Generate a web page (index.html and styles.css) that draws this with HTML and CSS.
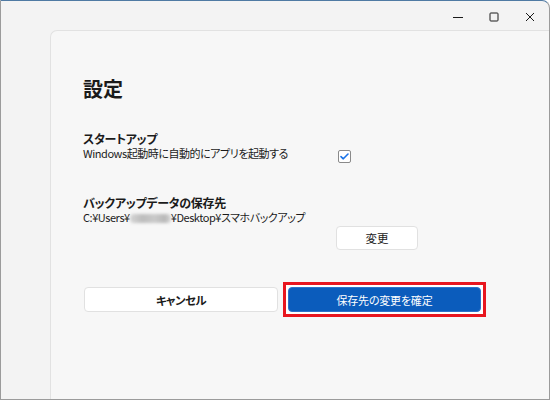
FILE: index.html
```html
<!DOCTYPE html>
<html lang="ja">
<head>
<meta charset="utf-8">
<link rel="stylesheet" href="styles.css">
</head>
<body>
<div class="window">
  <div class="titlebar">
    <div class="cap">
      <svg width="10" height="10" viewBox="0 0 10 10"><path d="M0 5.5H10" stroke="#1a1a1a" stroke-width="1"/></svg>
    </div>
    <div class="cap">
      <svg width="10" height="10" viewBox="0 0 10 10"><rect x="1" y="1" width="8" height="8" rx="0.8" fill="none" stroke="#1a1a1a" stroke-width="1"/></svg>
    </div>
    <div class="cap">
      <svg width="10" height="10" viewBox="0 0 10 10"><path d="M1 1L9 9M9 1L1 9" stroke="#1a1a1a" stroke-width="1"/></svg>
    </div>
  </div>
  <div class="body">
    <div class="panel">
      <h1 class="title">設定</h1>
      <div class="section">
        <div class="label">スタートアップ</div>
        <div class="desc">Windows起動時に自動的にアプリを起動する</div>
        <div class="check">
          <svg width="9" height="7" viewBox="0 0 9 7"><path d="M1 3.6L3.3 5.8L8 1" fill="none" stroke="#1a73e8" stroke-width="1.6" stroke-linecap="round" stroke-linejoin="round"/></svg>
        </div>
      </div>
      <div class="section second">
        <div class="label">バックアップデータの保存先</div>
        <div class="desc">C:¥Users¥<span class="blur"></span>¥Desktop¥スマホバックアップ</div>
        <button class="btn change">変更</button>
      </div>
      <div class="actions">
        <button class="btn cancel">キャンセル</button>
        <div class="focus-ring">
          <button class="btn primary">保存先の変更を確定</button>
        </div>
      </div>
    </div>
  </div>
</div>
</body>
</html>
```

FILE: styles.css
```css
* { box-sizing: border-box; }
html, body { margin: 0; padding: 0; }
body {
  width: 550px;
  height: 400px;
  overflow: hidden;
  font-family: "Noto Sans CJK JP", "Noto Sans", sans-serif;
  font-feature-settings: "palt";
  color: #1b1b1b;
}
.window {
  width: 550px;
  height: 400px;
  background: #f3f3f3;
  border: 1px solid #9b9b9b;
  border-top-color: #4f7aa3;
  border-top-right-radius: 8px;
  display: flex;
  flex-direction: column;
  overflow: hidden;
}
.titlebar {
  height: 29px;
  display: flex;
  justify-content: flex-end;
  padding-right: 1px;
  flex: none;
}
.cap {
  width: 36px;
  height: 29px;
  display: flex;
  align-items: center;
  justify-content: center;
  padding-top: 3px;
}
.body {
  flex: 1;
  display: flex;
  padding-left: 49px;
}
.panel {
  flex: 1;
  background: #f7f7f7;
  border-top: 1px solid #e2e2e2;
  border-left: 1px solid #e2e2e2;
  border-top-left-radius: 7px;
  padding: 44px 0 0 32px;
}
.title {
  margin: 0;
  font-size: 20px;
  line-height: 28px;
  font-weight: 700;
}
.section {
  display: grid;
  grid-template-columns: 253px auto;
  align-items: start;
  margin-top: 29px;
}
.section.second { margin-top: 33px; }
.label {
  grid-column: 1 / 3;
  grid-row: 1;
  font-size: 12px;
  line-height: 14px;
  font-weight: 700;
  letter-spacing: -0.3px;
}
.desc {
  grid-column: 1;
  grid-row: 2;
  font-size: 11px;
  line-height: 14px;
  letter-spacing: -0.45px;
  white-space: nowrap;
}
.check {
  grid-column: 2;
  grid-row: 2;
  margin: 4px 0 0 2px;
  width: 13px;
  height: 13px;
  border: 1px solid #8a8a8a;
  border-radius: 2px;
  background: #fff;
  display: flex;
  align-items: center;
  justify-content: center;
}
.blur {
  display: inline-block;
  width: 41px;
  height: 9px;
  vertical-align: -1px;
  border-radius: 4px;
  background: linear-gradient(90deg, #d4d4d4, #bdbdbd 30%, #c9c9c9 60%, #b8b8b8 85%, #d6d6d6);
  filter: blur(1.8px);
}
.btn {
  font-family: inherit;
  font-feature-settings: "palt";
  font-size: 11.5px;
  border: 1px solid #e1e1e1;
  border-radius: 4px;
  background: #fff;
  color: #1b1b1b;
  padding: 0;
  margin: 0;
}
.change {
  grid-column: 2;
  grid-row: 3;
  width: 82px;
  height: 24px;
  margin-top: 2px;
}
.actions {
  display: flex;
  align-items: center;
  gap: 5px;
  margin-top: 32px;
  margin-left: 1px;
}
.cancel {
  width: 194px;
  height: 25px;
  font-weight: 700;
  letter-spacing: -0.6px;
}
.focus-ring {
  border: 3px solid #e8161f;
  padding: 2px;
  background: #fff;
  display: flex;
}
.primary {
  width: 193px;
  height: 25px;
  font-size: 11px;
  letter-spacing: -0.2px;
  background: #0b5cbc;
  border-color: #2f72c8;
  color: #fff;
}
```
